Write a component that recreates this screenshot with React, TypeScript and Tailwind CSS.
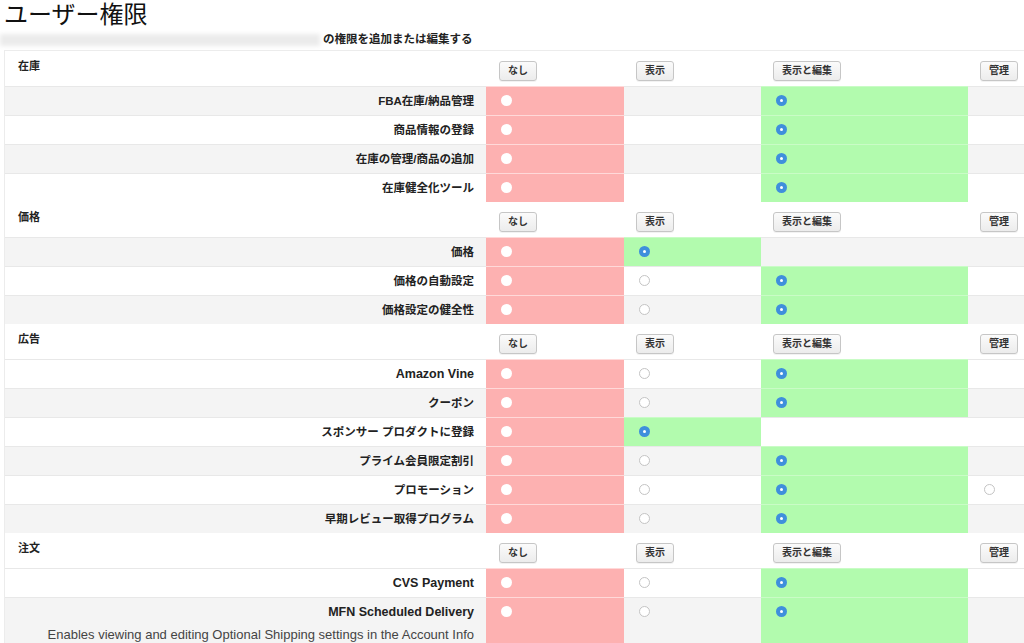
import React from "react";

type Cell = "none" | "red" | "green" | "open";

type Row = {
  label: string;
  latin?: boolean;
  note?: string;
  cells: [Cell, Cell, Cell, Cell];
};

type Section = {
  title: string;
  rows: Row[];
};

const sections: Section[] = [
  {
    title: "在庫",
    rows: [
      { label: "FBA在庫/納品管理", cells: ["red", "none", "green", "none"] },
      { label: "商品情報の登録", cells: ["red", "none", "green", "none"] },
      { label: "在庫の管理/商品の追加", cells: ["red", "none", "green", "none"] },
      { label: "在庫健全化ツール", cells: ["red", "none", "green", "none"] },
    ],
  },
  {
    title: "価格",
    rows: [
      { label: "価格", cells: ["red", "green", "none", "none"] },
      { label: "価格の自動設定", cells: ["red", "open", "green", "none"] },
      { label: "価格設定の健全性", cells: ["red", "open", "green", "none"] },
    ],
  },
  {
    title: "広告",
    rows: [
      { label: "Amazon Vine", latin: true, cells: ["red", "open", "green", "none"] },
      { label: "クーポン", cells: ["red", "open", "green", "none"] },
      { label: "スポンサー プロダクトに登録", cells: ["red", "green", "none", "none"] },
      { label: "プライム会員限定割引", cells: ["red", "open", "green", "none"] },
      { label: "プロモーション", cells: ["red", "open", "green", "open"] },
      { label: "早期レビュー取得プログラム", cells: ["red", "open", "green", "none"] },
    ],
  },
  {
    title: "注文",
    rows: [
      { label: "CVS Payment", latin: true, cells: ["red", "open", "green", "none"] },
      {
        label: "MFN Scheduled Delivery",
        latin: true,
        note: "Enables viewing and editing Optional Shipping settings in the Account Info",
        cells: ["red", "open", "green", "none"],
      },
    ],
  },
];

const buttons = ["なし", "表示", "表示と編集", "管理"];

const Radio = ({ kind }: { kind: Cell }) => {
  if (kind === "none") return null;
  if (kind === "green") {
    return (
      <span className="flex h-[11px] w-[11px] items-center justify-center rounded-full bg-[#3f8fdc]">
        <span className="h-[3px] w-[3px] rounded-full bg-white" />
      </span>
    );
  }
  if (kind === "red") {
    return <span className="block h-[11px] w-[11px] rounded-full bg-white" />;
  }
  return <span className="block h-[11px] w-[11px] rounded-full border border-[#c4c4c4] bg-white" />;
};

export default function App() {
  let stripe = 0;

  return (
    <div className="h-[643px] w-[1024px] overflow-hidden bg-white text-[#333] font-['Liberation_Sans','Noto_Sans_CJK_JP',sans-serif]">
      <h1 className="pl-[4px] text-[24px] leading-[30px] text-[#111]">ユーザー権限</h1>

      <div className="flex h-[20px] items-center">
        <div className="h-[12px] w-[320px] bg-[#ebebeb] blur-[2px]" />
        <span className="pl-[3px] text-[11.5px] font-semibold text-[#222]">の権限を追加または編集する</span>
      </div>

      <div className="ml-[4px] border-l border-t border-[#ececec]">
        {sections.map((section) => (
          <div key={section.title}>
            <div className="grid h-[35px] grid-cols-[481px_138px_137px_207px_1fr] items-start bg-white">
              <div className="pl-[13px] pt-[8px] text-[11px] font-bold leading-[14px] text-[#222]">{section.title}</div>
              {buttons.map((b, i) => (
                <div key={b} className={i === 0 ? "pl-[13px] pt-[6px]" : "pl-[12px] pt-[6px]"}>
                  <span className="inline-flex h-[20px] items-center rounded-[3px] border border-[#c6c6c6] bg-gradient-to-b from-[#fbfbfb] to-[#ececec] px-[8px] text-[10px] font-bold text-[#333] shadow-[0_1px_0_rgba(0,0,0,0.05)]">
                    {b}
                  </span>
                </div>
              ))}
            </div>

            {section.rows.map((row) => {
              const gray = stripe++ % 2 === 0;
              const base = gray ? "bg-[#f4f4f4]" : "bg-white";
              return (
                <div
                  key={row.label}
                  className={`grid grid-cols-[481px_138px_137px_207px_1fr] border-t border-[#e8e8e8] ${base} ${row.note ? "min-h-[60px]" : "h-[29px]"}`}
                >
                  <div className="flex flex-col items-end pr-[12px] pt-[6px] text-right">
                    <span
                      className={`font-bold leading-[16px] text-[#222] ${row.latin ? "text-[12.5px]" : "text-[11.5px]"}`}
                    >
                      {row.label}
                    </span>
                    {row.note && (
                      <span className="pt-[7px] text-[13px] leading-[16px] text-[#444]">{row.note}</span>
                    )}
                  </div>
                  {row.cells.map((c, i) => {
                    const bg =
                      i === 0
                        ? "bg-[#fdb1b1] -mt-px border-t border-[#ffd9d9]"
                        : c === "green"
                          ? "bg-[#b2fbae] -mt-px border-t border-[#c9fcc6]"
                          : "";
                    return (
                      <div key={i} className={`pt-[8px] ${bg} ${i === 3 ? "pl-[16px]" : "pl-[15px]"}`}>
                        <Radio kind={c} />
                      </div>
                    );
                  })}
                </div>
              );
            })}
          </div>
        ))}
      </div>
    </div>
  );
}
